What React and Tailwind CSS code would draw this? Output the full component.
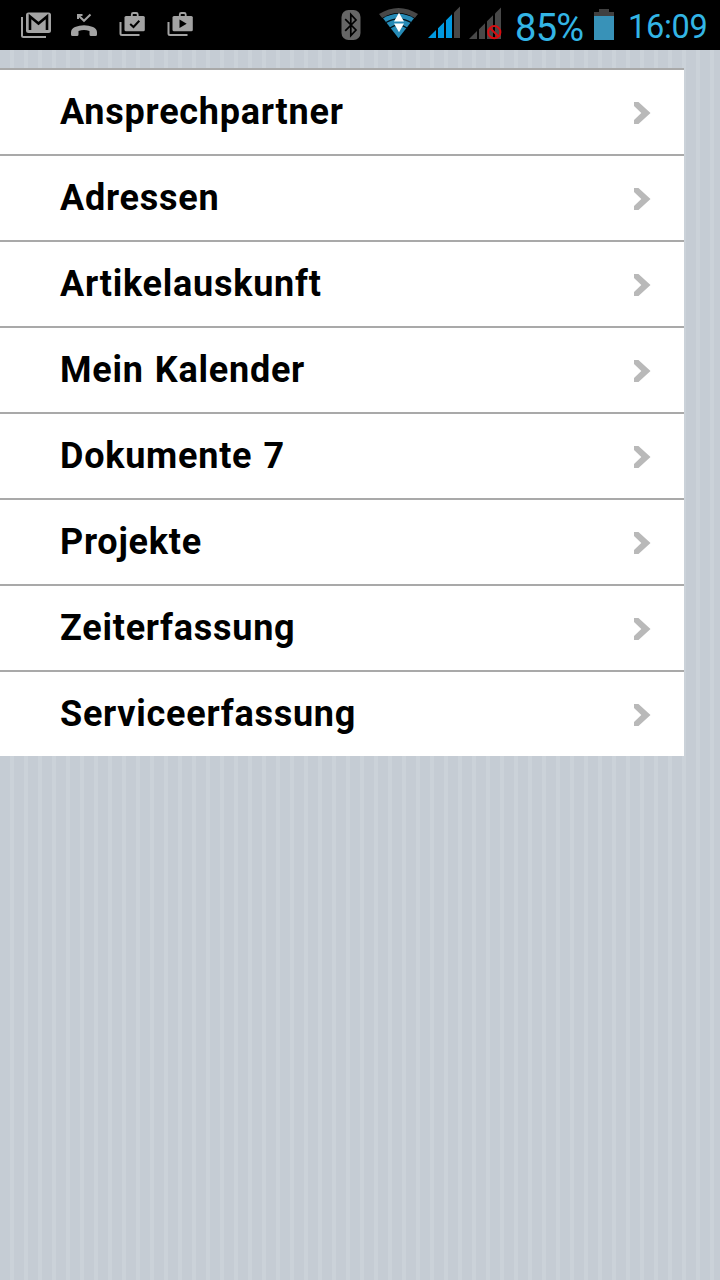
const menuItems = [
  "Ansprechpartner",
  "Adressen",
  "Artikelauskunft",
  "Mein Kalender",
  "Dokumente 7",
  "Projekte",
  "Zeiterfassung",
  "Serviceerfassung",
];

function GmailIcon() {
  return (
    <svg width="32" height="50" viewBox="20 0 32 50" fill="none">
      <path d="M22 17V35.500Q22 37 23.500 37H46" stroke="#a3a3a3" strokeWidth="2" />
      <rect x="26" y="12.500" width="25" height="20.500" rx="2.500" fill="#a3a3a3" />
      <path d="M30 30V16.500L38.500 23.500L47 16.500V30" stroke="#000" strokeWidth="2.600" />
    </svg>
  );
}

function MissedCallIcon() {
  return (
    <svg width="28" height="50" viewBox="70 0 28 50" fill="none">
      <path d="M78 19V15H82.500M78.500 15.500L84 20.800L90.500 14.500" stroke="#a3a3a3" strokeWidth="2" />
      <path
        d="M71 32.500Q71 28.500 75 27Q84 23.500 93 27Q97 28.500 97 32.500V34.500Q97 36 95.500 36H91Q89.500 36 89.500 34.500V31Q84 29 78.500 31V34.500Q78.500 36 77 36H72.500Q71 36 71 34.500Z"
        fill="#a3a3a3"
      />
    </svg>
  );
}

function BagIcon({ children }) {
  return (
    <svg width="28" height="50" viewBox="118 0 28 50" fill="none">
      <path d="M120.500 22V33.500Q120.500 35 122 35H139.500" stroke="#a3a3a3" strokeWidth="2" />
      <path d="M131.800 17V14.500Q131.800 13 133.300 13H136.200Q137.700 13 137.700 14.500V17" stroke="#a3a3a3" strokeWidth="1.800" />
      <rect x="124.500" y="16" width="20.300" height="15.300" rx="1.500" fill="#a3a3a3" />
      {children}
    </svg>
  );
}

function BluetoothIcon() {
  return (
    <svg width="22" height="50" viewBox="340 0 22 50" fill="none">
      <rect x="341.500" y="10" width="19" height="30" rx="7" fill="#666" />
      <path d="M345.200 19.200L356 30L350.800 35.500V14.500L356 20L345.200 30.800" stroke="#000" strokeWidth="1.700" />
    </svg>
  );
}

function WifiIcon() {
  return (
    <svg width="40" height="50" viewBox="379 0 40 50" fill="none">
      <path d="M379 14Q398.500 2 418 14L414.800 18Q398.500 8 382.200 18Z" fill="#484848" />
      <path d="M383 18.300Q398.500 9 414 18.300L398.500 38.200Z" fill="#268bb7" />
      <path d="M385.500 22.800Q398.500 15 411.500 22.800M389.500 28.300Q398.500 22 407.500 28.300" stroke="#001018" strokeWidth="1.300" />
      <path d="M399 12.800L404 21.500H394ZM394 23.500H404L399 32.200Z" fill="#fff" />
    </svg>
  );
}

function SignalBars({ fill }) {
  return (
    <>
      <path d="M428 38L436 30V38ZM438 28.200L444 22.200V38H438ZM446 20.200L452 14.200V38H446Z" fill={fill} />
      <path d="M454 12.500L460 6.500V38H454Z" fill="#484848" />
    </>
  );
}

function SignalIcon() {
  return (
    <svg width="34" height="50" viewBox="427 0 34 50">
      <SignalBars fill="#0099e0" />
    </svg>
  );
}

function NoSignalIcon() {
  return (
    <svg width="34" height="50" viewBox="427 -1 34 50" fill="none">
      <SignalBars fill="#484848" />
      <circle cx="453.300" cy="31.200" r="6.100" stroke="#d90c10" strokeWidth="2" />
      <path d="M449 27L457.500 35.500" stroke="#d90c10" strokeWidth="2" />
    </svg>
  );
}

function BatteryIcon() {
  return (
    <svg width="20" height="50" viewBox="594 0 20 50">
      <path d="M599 9H609V12H614V16H594V12H599Z" fill="#404040" />
      <path d="M594 16H614V40H594Z" fill="#3892b8" />
    </svg>
  );
}

function StatusBar() {
  return (
    <header className="flex h-[50px] shrink-0 bg-black pl-5 text-[#33b5e5]">
      <GmailIcon />
      <div className="ml-[18px]">
        <MissedCallIcon />
      </div>
      <div className="ml-5">
        <BagIcon>
          <path d="M130.200 24L133.500 27L139.300 20.700" stroke="#000" strokeWidth="2" />
        </BagIcon>
      </div>
      <div className="ml-5">
        <BagIcon>
          <path d="M131.500 19.500L138.700 23.800L131.500 28Z" fill="#000" />
        </BagIcon>
      </div>
      <div className="ml-[146px]">
        <BluetoothIcon />
      </div>
      <div className="ml-[17px]">
        <WifiIcon />
      </div>
      <div className="ml-2">
        <SignalIcon />
      </div>
      <div className="ml-[7px]">
        <NoSignalIcon />
      </div>
      <span className="ml-[13px] w-[79px] whitespace-nowrap text-[38px] leading-[56px] tracking-[-0.7px]">85%</span>
      <BatteryIcon />
      <span className="ml-[14px] whitespace-nowrap text-[32.5px] leading-[54px] tracking-[-0.3px]">16:09</span>
    </header>
  );
}

function Chevron() {
  return (
    <svg width="17" height="24" viewBox="0 0 17 24">
      <path d="M0 1H4.500L16.500 12L4.500 23H0V19L7.300 12L0 5Z" fill="#b9b9b9" />
    </svg>
  );
}

export default function App() {
  return (
    <div className="flex h-[1280px] w-[720px] flex-col overflow-hidden bg-[repeating-linear-gradient(90deg,#c5ccd4_0px,#c5ccd4_9.5px,#cbd2d9_10.5px,#cbd2d9_13.5px,#c5ccd4_14px)] font-['Roboto',sans-serif]">
      <StatusBar />
      <ul className="mt-[18px] w-[684px]">
        {menuItems.map((item) => (
          <li
            key={item}
            className="flex h-[86px] items-center justify-between border-t-2 border-[#a9a9a9] bg-white pr-[33px] pl-[60px]"
          >
            <span className="text-[36px] leading-[42px] font-bold tracking-[0.75px] text-black [word-spacing:1.5px]">{item}</span>
            <div className="pt-px">
              <Chevron />
            </div>
          </li>
        ))}
      </ul>
    </div>
  );
}
